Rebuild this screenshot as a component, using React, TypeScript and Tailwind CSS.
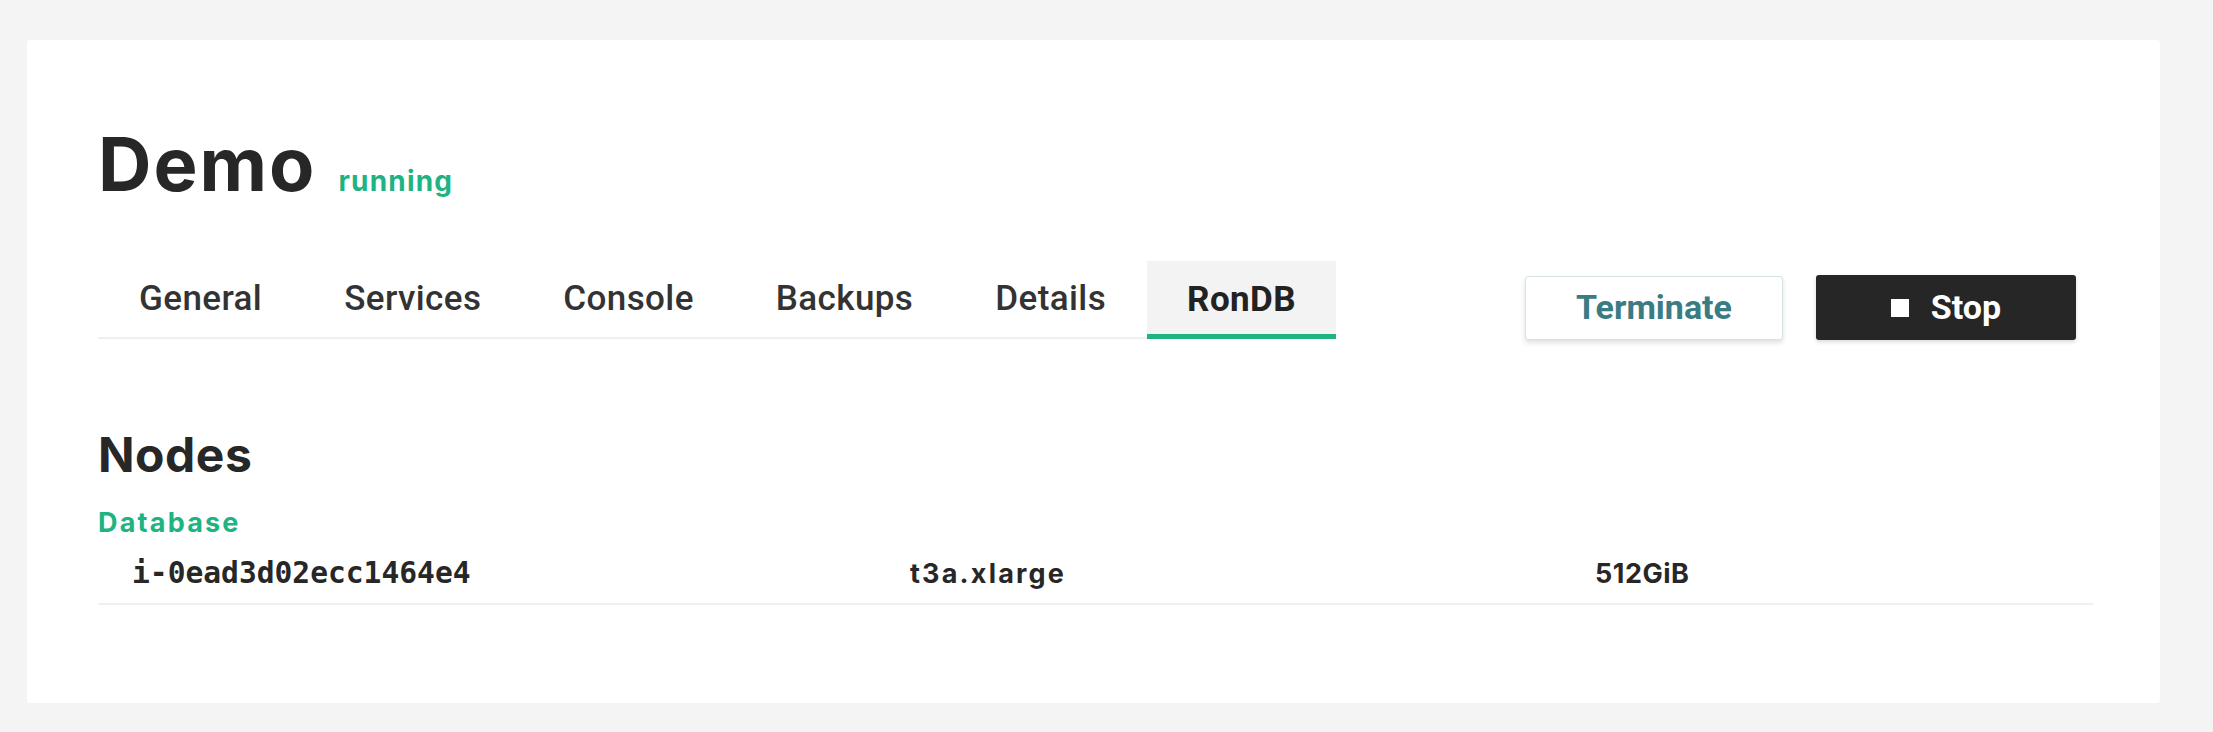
const tabs = ['General', 'Services', 'Console', 'Backups', 'Details', 'RonDB'];
const active = 'RonDB';

const nodes = [{ id: 'i-0ead3d02ecc1464e4', type: 't3a.xlarge', disk: '512GiB' }];

export default function App() {
  return (
    <div className="min-h-screen bg-[#f4f4f4] pt-[40px] pl-[27px]">
      <div className="w-[2133px] h-[663px] bg-white rounded-[3px] pl-[71px] pr-[67px] pt-[87px]">
        {/* Header */}
        <div className="flex items-baseline gap-[22px] font-['Inter',sans-serif]">
          <h1 className="text-[74px] leading-none font-bold text-[#272727] tracking-[2px]">Demo</h1>
          <span className="text-[28px] leading-none font-bold text-[#1eb382] tracking-[1.2px]">running</span>
        </div>

        {/* Tabs + actions */}
        <div className="mt-[60px] flex items-end justify-between pr-[17px]">
          <div className="flex border-b-2 border-[#f0f0f0] font-['Roboto',sans-serif]">
            {tabs.map((t) => (
              <div
                key={t}
                className={
                  t === active
                    ? 'h-[78px] px-[40px] flex items-center bg-[#f3f3f3] border-b-[5px] border-[#1eb382] -mb-[2px] pt-[5px] text-[35px] font-bold text-[#222] tracking-[0.4px]'
                    : 'h-[76px] px-[41px] flex items-center text-[35px] font-medium text-[#333] tracking-[0.4px]'
                }
              >
                {t}
              </div>
            ))}
          </div>
          <div className="flex items-center gap-[33px] font-['Roboto',sans-serif] mb-[-1px]">
            <button className="w-[258px] h-[64px] bg-white border border-[#d3e3e6] rounded-[3px] shadow-[0_3px_5px_rgba(0,0,0,0.12)] text-[34px] font-bold text-[#3a7c84]">
              Terminate
            </button>
            <button className="w-[260px] h-[65px] bg-[#262626] rounded-[3px] shadow-[0_2px_4px_rgba(0,0,0,0.15)] flex items-center justify-center gap-[22px] text-[34px] font-bold text-white">
              <span className="w-[18px] h-[18px] bg-white" />
              <span>Stop</span>
            </button>
          </div>
        </div>

        {/* Nodes */}
        <h2 className="mt-[92px] text-[48px] leading-none font-bold text-[#272727] tracking-[0.5px] font-['Inter',sans-serif]">
          Nodes
        </h2>
        <div className="mt-[30px] text-[27px] leading-none font-bold text-[#1eb382] tracking-[2.2px] font-['Inter',sans-serif]">
          Database
        </div>
        <div className="mt-[23px]">
          {nodes.map((n) => (
            <div
              key={n.id}
              className="grid grid-cols-[812px_685px_1fr] items-baseline pb-[14px] border-b-2 border-[#f0f0f0]"
            >
              <span className="pl-[34px] text-[29.6px] leading-none font-bold text-[#272727] font-['DejaVu_Sans_Mono',monospace]">
                {n.id}
              </span>
              <span className="text-[27px] leading-none font-bold text-[#272727] tracking-[2.2px] font-['Inter',sans-serif]">
                {n.type}
              </span>
              <span className="text-[27px] leading-none font-bold text-[#272727] tracking-[0.5px] font-['Inter',sans-serif]">
                {n.disk}
              </span>
            </div>
          ))}
        </div>
      </div>
    </div>
  );
}
